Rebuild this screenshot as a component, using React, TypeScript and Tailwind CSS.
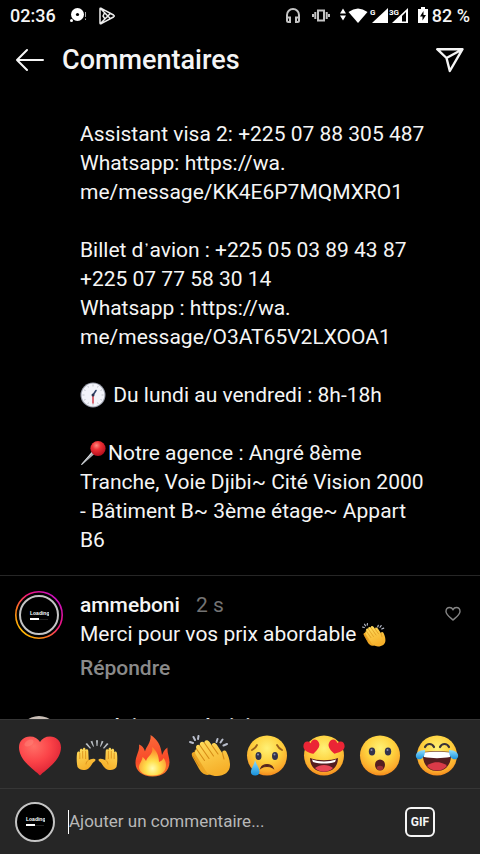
import type { ReactNode } from "react";

function Gradients() {
  return (
    <svg className="absolute size-0" aria-hidden="true">
      <defs>
        <radialGradient id="face" cx="0.5" cy="0.32" r="0.68">
          <stop offset="0" stopColor="#fff176" />
          <stop offset="0.5" stopColor="#fed23f" />
          <stop offset="0.85" stopColor="#fbab2c" />
          <stop offset="1" stopColor="#f48a1c" />
        </radialGradient>
        <linearGradient id="skin" x1="0" y1="0" x2="0.4" y2="1">
          <stop offset="0" stopColor="#ffdf60" />
          <stop offset="1" stopColor="#f6b02a" />
        </linearGradient>
        <radialGradient id="heart" cx="0.35" cy="0.25" r="0.8">
          <stop offset="0" stopColor="#ff6f66" />
          <stop offset="0.5" stopColor="#fb4348" />
          <stop offset="1" stopColor="#d91f32" />
        </radialGradient>
        <linearGradient id="flame" x1="0.4" y1="0" x2="0.5" y2="1">
          <stop offset="0" stopColor="#fb6a3a" />
          <stop offset="0.6" stopColor="#f84a28" />
          <stop offset="1" stopColor="#fb7a2b" />
        </linearGradient>
        <radialGradient id="flameCore" cx="0.5" cy="0.75" r="0.65">
          <stop offset="0" stopColor="#fffbb0" />
          <stop offset="0.4" stopColor="#ffe04d" />
          <stop offset="1" stopColor="#fd8a2b" />
        </radialGradient>
        <linearGradient id="tear" x1="0" y1="0" x2="0" y2="1">
          <stop offset="0" stopColor="#8fe0ff" />
          <stop offset="1" stopColor="#1791dc" />
        </linearGradient>
        <linearGradient id="ring" x1="0" y1="1" x2="1" y2="0">
          <stop offset="0.1" stopColor="#ffc400" />
          <stop offset="0.32" stopColor="#ff7a1a" />
          <stop offset="0.6" stopColor="#f0167c" />
          <stop offset="0.9" stopColor="#c60fc4" />
        </linearGradient>
        <radialGradient id="pin" cx="0.4" cy="0.3" r="0.7">
          <stop offset="0" stopColor="#ff8a80" />
          <stop offset="0.4" stopColor="#ee3136" />
          <stop offset="1" stopColor="#b30d1c" />
        </radialGradient>
      </defs>
    </svg>
  );
}

function HeartEmoji() {
  return (
    <svg viewBox="0 0 42 42" className="size-full" aria-hidden="true">
      <path d="M21 40.500C17 36 0 26 0 12.500C0 5.500 5 1.500 11 1.500C15.500 1.500 19 3.500 21 7C23 3.500 26.500 1.500 31 1.500C37 1.500 42 5.500 42 12.500C42 26 25 36 21 40.500Z" fill="url(#heart)" />
      <ellipse cx="10" cy="8" rx="5" ry="3" fill="#ff9488" opacity="0.35" transform="rotate(-30 10 8)" />
    </svg>
  );
}

function RaisedHand() {
  return (
    <g>
      <path d="M1.500 32C.5 28 .5 22 1 18.500C1.300 16 3.600 16 3.800 18V15.500C4 13 6.500 13 6.700 15.500V14.500C7 12.300 9.300 12.300 9.600 14.500V15.500C10 13.600 12.200 13.800 12.300 16L12.700 25C14 24.500 16 23.500 18 23.800C20 24.200 19.800 25.600 18.500 26.500C16 28 15.500 31 12.500 33.500C9 36 3.500 35.500 1.500 32Z" fill="url(#skin)" />
      <path d="M3.800 18V24M6.700 16V23.500M9.600 16V24M12.700 25C11 26 10 27.500 10 29.500" stroke="#d98a16" strokeWidth="0.800" fill="none" />
    </g>
  );
}

function HandsEmoji() {
  return (
    <svg viewBox="0 0 42 42" className="size-full" aria-hidden="true">
      <RaisedHand />
      <g transform="translate(42 0) scale(-1 1)">
        <RaisedHand />
      </g>
      <path d="M9.500 9L11 8L15 13L14 13.700ZM14.500 6.500L16.300 5.800L18 11.500L17.200 11.800ZM20 5.200H22L21.500 11H20.500ZM27.500 6.500L25.700 5.800L24 11.500L24.800 11.800ZM32.500 9L31 8L27 13L28 13.700Z" fill="#b9bec2" />
    </svg>
  );
}

function FireEmoji() {
  return (
    <svg viewBox="0 0 42 42" className="size-full" aria-hidden="true">
      <path d="M18.500 0C19.500 7 14.500 11 13 16.500C12 13 10 10.500 7 9.500C8 16 3.500 20 3.500 28C3.500 36 10.500 41.500 20.500 41.500C31 41.500 37.500 36 37.500 27C37.500 22 35 18 35.500 12.500C32 15 31.500 17 30 20C29 10 25 4 18.500 0Z" fill="url(#flame)" />
      <path d="M20 12C22 19 15.500 21 14 26C13 24 12 23 10.500 22C10.500 26 6.500 29 7 33C8 38 13 40.500 21 40.500C29 40.500 34 36.500 34 30C34 27 33 25 31.500 23C31 25 29 26 27 27C27 20 24 15 20 12Z" fill="url(#flameCore)" />
    </svg>
  );
}

function ClapEmoji() {
  return (
    <svg viewBox="0 0 42 42" className="size-full" aria-hidden="true">
      <path d="M5 17C3 17 2 19 3.500 22L9 32C12 38 16 41 21 39.500L27 36L14 12Z" fill="#eda624" />
      <path d="M4 21L10 31M6 16L13 28" stroke="#d48914" strokeWidth="1" strokeLinecap="round" />
      <path d="M7.500 14C6 11 8.500 8.500 11 10.500C10 7.500 13 5.500 15.500 8C15 5 18.500 4 20.500 7L23 10.500C22.500 7.500 26 7 28 10L33.500 18.500C32.500 15.500 36 14.500 37.500 17C39 20 41 25 41 30C41 37 35 41 28 41C22 41 18 39 15 33L7 20C5 17 6.500 14 7.500 14Z" fill="url(#skin)" />
      <path d="M7.500 14L15.500 25.500M11 10.500L20 23.500M15.500 8L24.500 21M23 10.500L29 19M33.500 18.500L35 24" stroke="#d78c16" strokeWidth="1.100" fill="none" strokeLinecap="round" />
      <path d="M1 7L4 8M4.500 2L6 5M9.500 1L9 4M28.500 4L27.500 7M33.500 4.500L31.500 7.500M38 9L34.500 10.500" stroke="#b8bdcb" strokeWidth="2" strokeLinecap="round" />
    </svg>
  );
}

function Face({ children }: { children: ReactNode }) {
  return (
    <svg viewBox="0 0 42 42" className="size-full overflow-visible" aria-hidden="true">
      <circle cx="21" cy="20.500" r="20" fill="url(#face)" />
      {children}
    </svg>
  );
}

function CryEmoji() {
  return (
    <Face>
      <path d="M6 15C8 14 10 12 11 10M36 15C34 14 32 12 31 10" stroke="#9a601c" strokeWidth="1.800" fill="none" strokeLinecap="round" />
      <ellipse cx="12.500" cy="21" rx="3" ry="4" fill="#33334c" />
      <ellipse cx="29" cy="21" rx="3" ry="4" fill="#33334c" />
      <circle cx="12" cy="19.500" r="1" fill="#8a90b0" />
      <circle cx="28.500" cy="19.500" r="1" fill="#8a90b0" />
      <path d="M15 33C17 28.500 25 28.500 27 33C24 31 18 31 15 33Z" fill="#55251e" stroke="#55251e" strokeWidth="1.200" />
      <path d="M9 25C10.500 30 13.500 33 13.500 36.500C13.500 39.500 11.500 40.500 9 40.500C6 40.500 4.500 39 5 36C5.500 33 8.500 29 9 25Z" fill="url(#tear)" />
    </Face>
  );
}

function HeartEyesEmoji() {
  const eye = "M8 14C4 12-1 9 0 4.500C1-.5 6-1 8 3C10-1 15-.5 16 4.500C17 9 11 12 8 14Z";
  return (
    <Face>
      <path d={eye} fill="#eb2535" transform="translate(1 5) rotate(-14 8 8)" />
      <path d={eye} fill="#eb2535" transform="translate(25 5) rotate(14 8 8)" />
      <path d="M7 23C15 26 27 26 35 23C35 32 29 37 21 37C13 37 7 32 7 23Z" fill="#541d20" />
      <path d="M9 24.500C16 27 26 27 33 24.500L32 27C25 29 17 29 10 27Z" fill="#fff" />
      <path d="M12 33C17 29 25 29 30 33C25 38 17 38 12 33Z" fill="#e84655" />
    </Face>
  );
}

function WowEmoji() {
  return (
    <Face>
      <ellipse cx="13" cy="16.500" rx="3.200" ry="4" fill="#33334c" />
      <ellipse cx="29" cy="16.500" rx="3.200" ry="4" fill="#33334c" />
      <circle cx="12.500" cy="15" r="1" fill="#8a90b0" />
      <circle cx="28.500" cy="15" r="1" fill="#8a90b0" />
      <ellipse cx="21" cy="30" rx="5" ry="5.500" fill="#541d20" />
      <ellipse cx="21" cy="33" rx="3.200" ry="2.200" fill="#9c3036" />
    </Face>
  );
}

function JoyEmoji() {
  return (
    <Face>
      <path d="M9 12C11 8 16 8 18 12M24 12C26 8 31 8 33 12" stroke="#3b3338" strokeWidth="2.200" fill="none" strokeLinecap="round" />
      <path d="M7 17C15 16 27 16 35 17C36 29 30 36 21 36C12 36 6 29 7 17Z" fill="#541d20" />
      <path d="M7.500 17.500C15 16.500 27 16.500 34.500 17.500L34 22C26 23.500 16 23.500 8 22Z" fill="#fff" />
      <path d="M11 31C16 26 26 26 31 31C26 37 16 37 11 31Z" fill="#d93a48" />
      <path d="M9 15C3 15-1 18 0 22C1 25 5 25 7 22.500C8.500 20.500 9 18 9 15Z" fill="url(#tear)" />
      <path d="M33 15C39 15 43 18 42 22C41 25 37 25 35 22.500C33.500 20.500 33 18 33 15Z" fill="url(#tear)" />
    </Face>
  );
}

function ClockEmoji() {
  return (
    <svg viewBox="0 0 26 26" className="mr-0.5 inline size-[26px] align-[-6px]" role="img" aria-label="13 h 30">
      <circle cx="13" cy="13" r="12.500" fill="#9a9eab" />
      <circle cx="13" cy="13" r="11.400" fill="#f3f4fb" />
      <path d="M13 2.500V4.500M13 21.500V23.500M2.500 13H4.500M21.500 13H23.500M7.800 4L8.500 5.500M18.200 4L17.500 5.500M4 7.800L5.500 8.500M4 18.200L5.500 17.500M22 7.800L20.500 8.500M22 18.200L20.500 17.500M7.800 22L8.500 20.500M18.200 22L17.500 20.500" stroke="#b4b7c0" strokeWidth="0.800" />
      <path d="M13 13L16 8.500" stroke="#30436b" strokeWidth="1.600" strokeLinecap="round" />
      <path d="M13 13V21" stroke="#d24552" strokeWidth="1.600" strokeLinecap="round" />
      <circle cx="13" cy="13" r="1.500" fill="#263250" />
    </svg>
  );
}

function PinEmoji() {
  return (
    <svg viewBox="0 0 26 26" className="mr-0.5 inline size-[26px] align-[-6px]" role="img" aria-label="Punaise">
      <path d="M12.500 11L15 13.500L2 25L1 24.500Z" fill="#a9adb2" />
      <path d="M13 11.500L1.500 24.500" stroke="#e9ecee" strokeWidth="0.800" />
      <circle cx="18" cy="8.500" r="7.600" fill="url(#pin)" />
    </svg>
  );
}

function LoadingAvatar() {
  return (
    <span className="flex size-10 flex-col items-center justify-center rounded-full border-2 border-[#c4c4c4] bg-black text-white">
      <svg viewBox="0 0 20 11" className="h-[11px] w-5" aria-hidden="true">
        <text x="1" y="5" fontSize="5" fontFamily="Liberation Sans, sans-serif" fill="currentColor" fontWeight="700">
          Loading
        </text>
        <rect x="1" y="8" width="9" height="2" fill="currentColor" />
        <rect x="10" y="9" width="9" height="1" fill="#222" />
      </svg>
    </span>
  );
}

function StatusBar() {
  return (
    <div className="flex h-8 shrink-0 items-center justify-between px-2.5 text-lg font-medium">
      <div className="flex items-center">
        <time>02:36</time>
        <svg viewBox="0 0 18 18" className="ml-3 size-[18px]" aria-hidden="true">
          <circle cx="9.500" cy="7.500" r="6.500" fill="#fff" />
          <circle cx="9.500" cy="7.500" r="1.600" fill="#000" />
          <circle cx="3.500" cy="13.500" r="1.500" fill="#fff" />
          <path d="M17.500 5V10M17.500 11.500V13" stroke="#aaa" />
        </svg>
        <svg viewBox="0 0 18 18" className="ml-3 size-[18px]" fill="none" stroke="#eee" strokeWidth="1.500" strokeLinejoin="round" aria-hidden="true">
          <path d="M2 2Q2 .8 3.200 1.300L15.500 8Q17 9 15.500 10L3.200 16.700Q2 17.200 2 16ZM2.500 1.500L12.500 11.700M2.500 16.500L12.500 6.300M6.500 6L5 9L7 12" />
        </svg>
      </div>
      <div className="flex items-center">
        <svg viewBox="0 0 18 18" className="mr-2.5 size-[18px]" aria-hidden="true">
          <path d="M3 12V8A6 6 0 0 1 15 8V13.500Q15 15 13.500 15H12V10.500H15M3 10.500H6V15H4.500Q3 15 3 13.500Z" fill="none" stroke="#c4c4c4" strokeWidth="2" />
        </svg>
        <svg viewBox="0 0 18 18" className="mr-2.5 size-[18px]" fill="none" stroke="#c4c4c4" strokeWidth="2" aria-hidden="true">
          <path d="M6 3.500H12V13.500H6ZM3.300 5V12M14.700 5V12M1 7V10M17 7V10" />
        </svg>
        <svg viewBox="0 0 70 18" className="mr-2 h-[18px] w-[70px]" fill="#fff" aria-hidden="true">
          <path d="M0 6.500L3 1.500L6 6.500ZM0 8.500H6L3 13.500Z" />
          <path d="M8.500 5Q18 -2 27.500 5L18 16Z" />
          <path d="M32 16L48 1V16Z" />
          <path d="M52 16L68 1V16Z" />
          <path d="M62 9L66 5V14.500H62Z" fill="#000" />
          <text x="30" y="8" fontSize="8" fontFamily="Roboto, sans-serif" fontWeight="700" stroke="#000" strokeWidth="1.500" paintOrder="stroke">G</text>
          <text x="49" y="8" fontSize="8" fontFamily="Roboto, sans-serif" fontWeight="700" stroke="#000" strokeWidth="1.500" paintOrder="stroke">3G</text>
        </svg>
        <svg viewBox="0 0 10 18" className="mr-1 h-[18px] w-2.5" aria-hidden="true">
          <path d="M3 0H7V2H10V16H0V2H3Z" fill="#fff" />
          <path d="M5.500 4L2 9.500H4.500V13.500L8 8H5.500Z" fill="#000" />
        </svg>
        <span>82 %</span>
      </div>
    </div>
  );
}

const reactions = [
  { label: "Cœur", art: <HeartEmoji /> },
  { label: "Mains levées", art: <HandsEmoji /> },
  { label: "Feu", art: <FireEmoji /> },
  { label: "Applaudissements", art: <ClapEmoji /> },
  { label: "Triste", art: <CryEmoji /> },
  { label: "Yeux en cœur", art: <HeartEyesEmoji /> },
  { label: "Étonné", art: <WowEmoji /> },
  { label: "Mort de rire", art: <JoyEmoji /> },
];

export default function App() {
  return (
    <div className="flex h-screen flex-col overflow-hidden bg-black font-['Roboto',sans-serif] text-[#f5f5f5]">
      <Gradients />
      <StatusBar />
      <header className="flex h-14 shrink-0 items-center px-4">
        <button type="button" aria-label="Retour">
          <svg viewBox="0 0 28 24" className="h-6 w-7" fill="none" stroke="#f5f5f5" strokeWidth="2" strokeLinecap="round" strokeLinejoin="round" aria-hidden="true">
            <path d="M27 12H1M11 2L1 12L11 22" />
          </svg>
        </button>
        <h1 className="ml-[18px] flex-1 text-[27px] leading-8 font-medium">Commentaires</h1>
        <button type="button" aria-label="Partager">
          <svg viewBox="0 0 28 26" className="h-[26px] w-7" fill="none" stroke="#f5f5f5" strokeWidth="2.400" strokeLinejoin="round" aria-hidden="true">
            <path d="M1.200 2.200H26.500L13.800 24L10.500 11ZM10.500 11L26.500 2.200" />
          </svg>
        </button>
      </header>

      <main className="min-h-0 flex-1 overflow-hidden text-[21px] leading-[29px]">
        <article className="border-b border-[#262626] pt-8 pr-12 pb-5 pl-20">
          <p>
            Assistant visa 2: +225 07 88 305 487
            <br />
            Whatsapp: https://wa.
            <br />
            me/message/KK4E6P7MQMXRO1
          </p>
          <p className="mt-[29px]">
            Billet d<span className="text-lg leading-none">᾽</span>avion : +225 05 03 89 43 87
            <br />
            +225 07 77 58 30 14
            <br />
            Whatsapp : https://wa.
            <br />
            me/message/O3AT65V2LXOOA1
          </p>
          <p className="mt-[29px]">
            <ClockEmoji /> Du lundi au vendredi : 8h-18h
          </p>
          <p className="mt-[29px]">
            <PinEmoji />
            Notre agence : Angré 8ème
            <br />
            Tranche, Voie Djibi~ Cité Vision 2000
            <br />- Bâtiment B~ 3ème étage~ Appart
            <br />
            B6
          </p>
        </article>

        <article className="flex items-start px-[15px] pt-[15px]">
          <span className="grid size-12 shrink-0 place-items-center">
            <svg viewBox="0 0 48 48" className="col-start-1 row-start-1 size-12" aria-hidden="true">
              <circle cx="24" cy="24" r="23.200" fill="none" stroke="url(#ring)" strokeWidth="1.600" />
            </svg>
            <span className="col-start-1 row-start-1">
              <LoadingAvatar />
            </span>
          </span>
          <div className="ml-[17px] flex-1">
            <div className="flex gap-4">
              <h2 className="font-medium">ammeboni</h2>
              <span className="text-[#737373]">2 s</span>
            </div>
            <p>
              Merci pour vos prix abordable{" "}
              <span className="inline-block size-6 align-[-6px]" role="img" aria-label="Applaudissements">
                <ClapEmoji />
              </span>
            </p>
            <button type="button" className="mt-[5px] block font-medium text-[#8a8a8a]">
              Répondre
            </button>
          </div>
          <button type="button" aria-label="J’aime" className="mt-[15px] mr-1">
            <svg viewBox="0 0 16 16" className="size-4" fill="none" stroke="#858585" strokeWidth="1.400" aria-hidden="true">
              <path d="M8 14C6 12 1 9 1 5.500C1 3 2.700 1.500 4.700 1.500C6.200 1.500 7.300 2.300 8 3.600C8.700 2.300 9.800 1.500 11.300 1.500C13.300 1.500 15 3 15 5.500C15 9 10 12 8 14Z" />
            </svg>
          </button>
        </article>

        <article className="flex items-start px-[15px] pt-[29px]">
          <span className="flex size-12 items-center justify-center">
            <span className="size-10 rounded-full bg-[#c8bdb5]" />
          </span>
          <h2 className="ml-[17px] font-medium">souloinassoulmici</h2>
        </article>
      </main>

      <footer className="shrink-0 border-t border-[#363636] bg-[#262626]">
        <div className="flex h-[68px] items-center justify-between pt-1 pr-[22px] pl-[19px]">
          {reactions.map((r) => (
            <button key={r.label} type="button" aria-label={r.label} className="size-[42px]">
              {r.art}
            </button>
          ))}
        </div>
        <form className="flex h-[66px] items-center border-t border-[#363636] pr-[45px] pl-[15px]">
          <LoadingAvatar />
          <span className="ml-[13px] h-6 w-px bg-white" />
          <input
            type="text"
            aria-label="Ajouter un commentaire"
            placeholder="Ajouter un commentaire..."
            className="min-w-0 flex-1 bg-transparent text-[17px] outline-none placeholder:text-[#b8b8b8]"
          />
          <button type="button" className="flex size-[30px] items-center justify-center rounded-md border-2 border-[#f5f5f5] text-xs font-bold">
            GIF
          </button>
        </form>
      </footer>
    </div>
  );
}
